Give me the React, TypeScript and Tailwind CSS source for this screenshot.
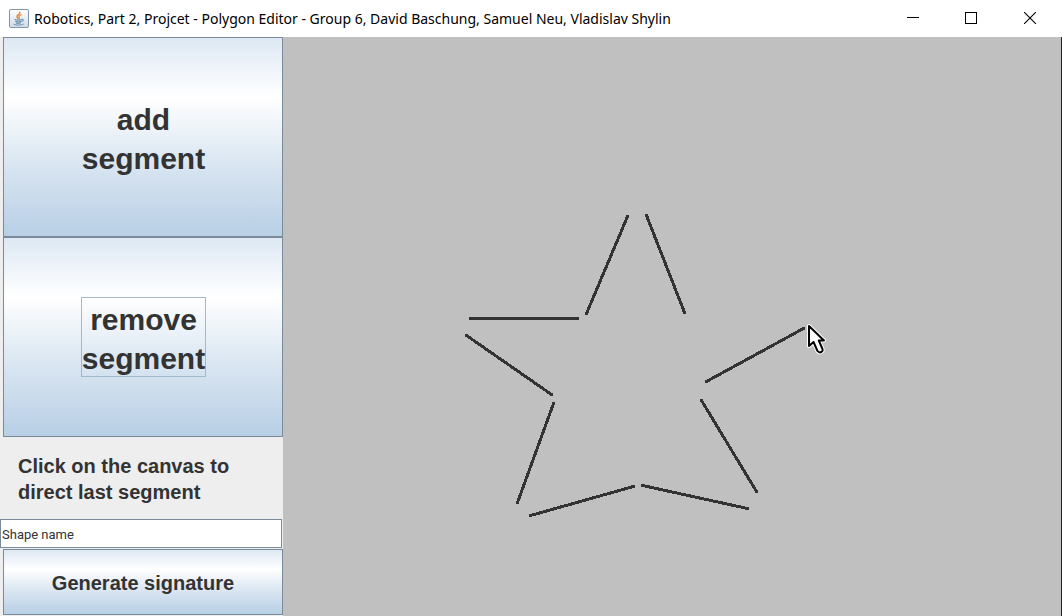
import { useState } from "react";

type Segment = [number, number, number, number];

const segments: Segment[] = [
  [344, 179, 303, 276],
  [363, 178, 401, 275],
  [187, 281, 294, 281],
  [183, 298, 268, 357],
  [270, 366, 234, 465],
  [247, 478, 350, 449],
  [359, 448, 464, 471],
  [418, 363, 473, 454],
  [423, 344, 520, 291],
];

const metal =
  "border border-[#7a8a99] bg-[linear-gradient(to_bottom,#dde8f3_0%,#ffffff_30%,#dde8f3_60%,#b8cfe5_100%)] font-bold text-[#333333]";

function JavaIcon() {
  return (
    <svg className="h-5 w-5 shrink-0" viewBox="0 0 20 20" aria-hidden="true">
      <defs>
        <linearGradient id="tile" x1="0" y1="0" x2="0" y2="1">
          <stop offset="0" stopColor="#ffffff" />
          <stop offset="1" stopColor="#cfdbe6" />
        </linearGradient>
      </defs>
      <rect x="0.5" y="0.5" width="19" height="18" rx="1.5" fill="url(#tile)" stroke="#8296ab" />
      <g fill="none" strokeLinecap="round">
        <path d="M10.8 3.200c.8 2-3.400 2.800-2.800 4.600.2.8.8 1.200 1.200 1.600" stroke="#e8833a" strokeWidth="1.500" />
        <path d="M12.200 5.800c-1.800.7-2.600 1.400-2 2.200.5.7.3 1-.2 1.500" stroke="#e8833a" strokeWidth="1.200" />
        <path d="M6 10.700c1.300.6 5.400.6 6.700 0M6.600 12.500c1.300.6 4.300.6 5.400 0M7.200 14c1.100.4 3.200.4 4.200 0" stroke="#4f7d9d" strokeWidth="1" />
        <path d="M13 10.300c2-.4 2 1.700 0 2.200" stroke="#4f7d9d" />
        <path d="M5 15.400c2 1.100 7.500 1 9.300-.2" stroke="#6b91ad" strokeWidth="1" />
      </g>
    </svg>
  );
}

function TitleBar() {
  return (
    <header className="flex h-[37px] shrink-0 items-center bg-white pl-[9px]">
      <JavaIcon />
      <h1 className="min-w-0 flex-1 truncate pl-[5px] font-['Noto_Sans',sans-serif] text-[14px] leading-5 text-black">
        Robotics, Part 2, Projcet - Polygon Editor - Group 6, David Baschung, Samuel Neu, Vladislav Shylin
      </h1>
      <div className="flex h-full pr-[2px] pb-px text-black">
        <button type="button" aria-label="Minimize" className="flex w-[58px] items-center justify-center">
          <svg className="h-3 w-3" viewBox="0 0 12 12" shapeRendering="crispEdges">
            <path d="M0 5.500H12" stroke="currentColor" />
          </svg>
        </button>
        <button type="button" aria-label="Maximize" className="flex w-[58px] items-center justify-center">
          <svg className="h-3 w-3" viewBox="0 0 12 12" shapeRendering="crispEdges">
            <rect x="0.5" y="0.5" width="11" height="11" fill="none" stroke="currentColor" />
          </svg>
        </button>
        <button type="button" aria-label="Close" className="flex w-[60px] items-center justify-center">
          <svg className="h-3 w-3" viewBox="0 0 12 12">
            <path d="M0 0L12 12M12 0L0 12" stroke="currentColor" strokeWidth="1.100" />
          </svg>
        </button>
      </div>
    </header>
  );
}

function Canvas() {
  return (
    <main className="relative min-w-0 flex-1 overflow-hidden border-r border-[#222222] bg-[#c0c0c0]">
      <svg className="absolute top-0 left-0 h-[579px] w-[778px]" viewBox="0 0 778 579" role="img" aria-label="Polygon canvas">
        <g stroke="#333333" strokeWidth="3" strokeLinecap="round" shapeRendering="crispEdges">
          {segments.map(([x1, y1, x2, y2]) => (
            <line key={`${x1}-${y1}`} x1={x1 + 0.5} y1={y1 + 0.5} x2={x2 + 0.5} y2={y2 + 0.5} />
          ))}
        </g>
        <g transform="translate(524 287)" strokeLinejoin="round">
          <path
            d="M2 2V22L6.500 18L10.500 27Q12.500 29.500 15 27.500Q16 26.500 15.500 25L11.800 16.500H17Z"
            fill="#ffffff"
            stroke="#ffffff"
            strokeWidth="4"
          />
          <path
            d="M2 2V22L6.500 18L10.500 27Q12.500 29.500 15 27.500Q16 26.500 15.500 25L11.800 16.500H17Z"
            fill="#ffffff"
            stroke="#000000"
            strokeWidth="2"
          />
        </g>
      </svg>
    </main>
  );
}

export default function App() {
  const [name, setName] = useState("Shape name");
  return (
    <div className="flex min-h-screen flex-col bg-[#eeeeee] font-['Liberation_Sans',Arial,sans-serif]">
      <TitleBar />
      <div className="flex flex-1">
        <aside className="flex w-[283px] shrink-0 flex-col">
          <div className="flex flex-col pl-[3px]">
            <button type="button" className={`${metal} flex h-[200px] items-center justify-center pl-px text-[30px] leading-[39px]`}>
              <span className="h-20 border border-transparent pt-[2px]">add<br />segment</span>
            </button>
            <button type="button" className={`${metal} flex h-[200px] items-center justify-center pl-px text-[30px] leading-[39px]`}>
              <span className="h-20 border border-[#a3b8cc] pt-[2px]">remove<br />segment</span>
            </button>
          </div>
          <p className="flex h-[82px] items-center pr-4 pb-px pl-[18px] pt-[3px] text-[20px] leading-[26px] font-bold text-[#333333]">
            Click on the canvas to direct last segment
          </p>
          <div className="pr-px">
            <input
              aria-label="Shape name"
              value={name}
              onChange={(e) => setName(e.target.value)}
              className="block h-[29px] w-full border border-[#7a8a99] bg-white px-px pt-[2px] font-['Roboto',sans-serif] text-[13px] text-[#333333] outline-none"
            />
          </div>
          <div className="flex flex-col pt-px pl-[3px]">
            <button type="button" className={`${metal} h-[66px] pt-[2px] text-[20px] leading-[26px]`}>
              Generate signature
            </button>
          </div>
        </aside>
        <Canvas />
      </div>
    </div>
  );
}
